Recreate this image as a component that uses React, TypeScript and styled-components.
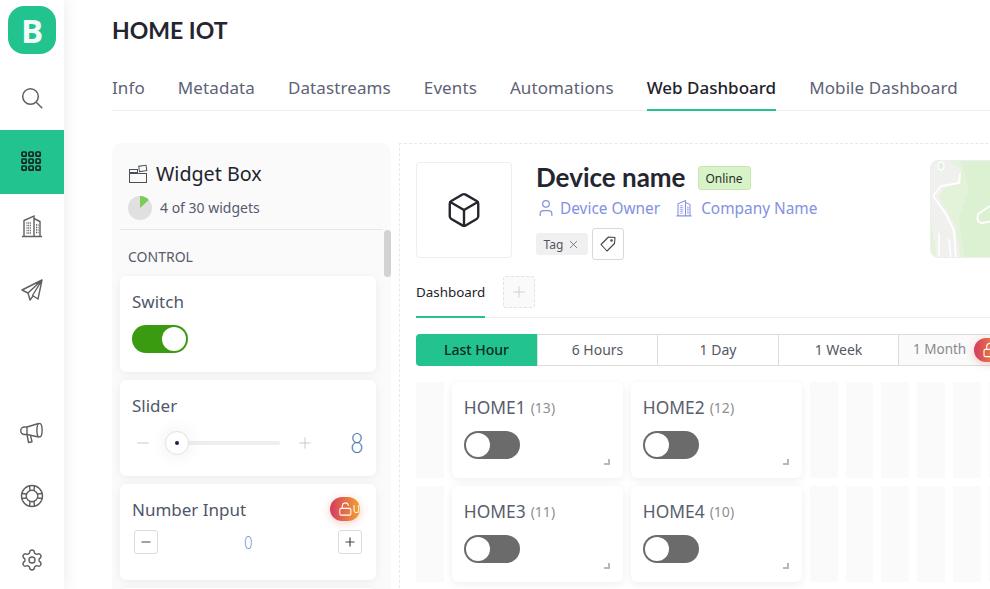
import React from "react";
import styled, { createGlobalStyle } from "styled-components";
import { Settings, Box, X, Plus, Minus, LockOpen, User } from "lucide-react";

const Global = createGlobalStyle`
  html, body { margin: 0; padding: 0; background: #fff; }
  body { font-family: "Noto Sans", "Open Sans", sans-serif; color: #51566a; }
  * { box-sizing: border-box; }
`;

const Frame = styled.div`
  width: 990px; height: 589px; overflow: hidden; display: flex; background: #fff;
`;
const Sidebar = styled.nav`
  width: 64px; height: 589px; flex: none; display: flex; flex-direction: column;
  box-shadow: 2px 0 14px rgba(0,0,0,.07); background: #fff; position: relative; z-index: 2;
`;
const LogoWrap = styled.div`
  height: 66px; padding: 6px 8px 12px; flex: none;
`;
const Logo = styled.div`
  width: 48px; height: 48px; border-radius: 16px; background: #22c38e; color: #f2fbf7;
  display: flex; align-items: center; justify-content: center;
  font: 700 33px "Open Sans", sans-serif;
`;
const NavItem = styled.div<{ $active?: boolean }>`
  height: 64px; flex: none; display: flex; align-items: center; justify-content: center;
  color: #5f5f5f; background: ${p => (p.$active ? "#22c38e" : "transparent")};
`;
const NavBottom = styled.div`
  margin-top: 78px; display: flex; flex-direction: column;
`;

const Main = styled.main`
  flex: none; width: 926px; padding-left: 48px;
`;
const Title = styled.h1`
  margin: 0; height: 60px; padding-top: 15px; font: 700 23px/30px Lato, sans-serif; color: #25252f;
`;
const Tabs = styled.div`
  display: flex; gap: 33px; height: 51px; border-bottom: 1px solid #eceef0; padding-top: 16px; width: 878px;
`;
const TabItem = styled.div<{ $active?: boolean }>`
  height: 35px; font-size: 17px; line-height: 24px; white-space: nowrap;
  letter-spacing: ${p => (p.$active ? "0" : ".1px")};
  color: ${p => (p.$active ? "#22222c" : "#5d6274")};
  font-weight: ${p => (p.$active ? 500 : 400)};
  border-bottom: ${p => (p.$active ? "2px solid #22c38e" : "none")};
`;
const Body = styled.div`
  display: flex; gap: 8px; margin-top: 32px; width: 1100px;
`;
const WidgetBox = styled.aside`
  width: 279px; height: 460px; flex: none; background: #fafafa; border-radius: 10px 10px 0 0; padding: 0 8px; position: relative; overflow: hidden;
`;
const BoxHead = styled.div`
  height: 87px; border-bottom: 1px solid #e6e6e6; padding: 18px 8px 0;
`;
const BoxTitle = styled.div`
  display: flex; align-items: center; gap: 8px; font-size: 19.7px; line-height: 26px; color: #23232d;
`;
const BoxSub = styled.div`
  display: flex; align-items: center; gap: 8px; font-size: 14px; line-height: 24px; margin-top: 9px; color: #575b6b;
`;
const Scroll = styled.div`
  position: absolute; right: 0; top: 87px; width: 7px; height: 47px; background: #d2d2d2; border-radius: 4px;
`;
const SectionLabel = styled.div`
  font-size: 14px; line-height: 20px; padding: 17px 8px 9px; color: #575b6b; height: 46px;
`;
const Stack = styled.div`
  display: flex; flex-direction: column; gap: 8px; width: 256px;
`;
const Card = styled.div`
  background: #fff; border-radius: 6px; height: 96px; padding: 12px; position: relative;
  box-shadow: 0 2px 8px rgba(0,0,0,.06);
`;
const CardTitle = styled.div`
  font-size: 17px; line-height: 28px; color: #51566a;
`;
const Toggle = styled.div<{ $on?: boolean }>`
  width: 56px; height: 28px; border-radius: 14px; margin-top: 9px; padding: 2px;
  background: ${p => (p.$on ? "#3a9b10" : "#6b6b6b")};
  display: flex; justify-content: ${p => (p.$on ? "flex-end" : "flex-start")};
`;
const Knob = styled.div`
  width: 24px; height: 24px; border-radius: 50%; background: #fff;
`;
const SliderRow = styled.div`
  display: flex; align-items: center; height: 46px; margin-left: 2px;
`;
const Track = styled.div`
  position: relative; width: 103px; height: 4px; background: #eee; border-radius: 2px; margin: 0 16px 0 25px;
`;
const Thumb = styled.div`
  position: absolute; left: -12px; top: -10px; width: 24px; height: 24px; border-radius: 50%;
  background: #fff; border: 1px solid #e2e2e2; box-shadow: 0 0 18px rgba(0,0,0,.08);
  display: flex; align-items: center; justify-content: center;
  &::after { content: ""; width: 4px; height: 4px; border-radius: 50%; background: #1c2150; }
`;
const SliderValue = styled.div`
  margin-left: auto; margin-right: -1px; font: 300 27px/30px Lato, sans-serif; color: #4f76a5; transform: scaleX(.85);
`;
const NumberRow = styled.div`
  display: flex; align-items: center; justify-content: space-between; margin: 6px 2px 0;
`;
const StepButton = styled.div`
  width: 24px; height: 24px; border: 1px solid #dcdcdc; border-radius: 3px; display: flex; align-items: center; justify-content: center; color: #444;
`;
const NumberValue = styled.div`
  font: 300 18px/24px Lato, sans-serif; color: #4f76c5; transform: scaleX(.72);
`;
const Premium = styled.div<{ $top: number; $right: number }>`
  position: absolute; top: ${p => p.$top}px; right: ${p => p.$right}px; width: 30px; height: 24px; border-radius: 12px;
  background: linear-gradient(90deg, #d63a62, #f2a12e); color: #fff; display: flex; align-items: center; overflow: hidden;
  padding-left: 8px; font-size: 10px; box-shadow: 0 2px 8px rgba(220,90,60,.3);
`;

const Canvas = styled.section`
  width: 780px; flex: none; height: 460px; padding: 18px 16px 0; border-top: 1px dashed #e8e8e8; border-left: 1px dashed #e8e8e8;
`;
const DeviceHead = styled.div`
  display: flex; height: 100px;
`;
const DeviceImage = styled.div`
  width: 96px; height: 96px; border: 1px solid #eee; border-radius: 4px; display: flex; align-items: center; justify-content: center; color: #25252f; flex: none;
`;
const DeviceInfo = styled.div`
  margin-left: 24px; display: flex; flex-direction: column;
`;
const NameRow = styled.div`
  display: flex; align-items: center; gap: 12px; height: 32px;
`;
const DeviceName = styled.div`
  font: 700 26px/30px Lato, sans-serif; color: #25252f; margin-bottom: 2px;
`;
const Online = styled.div`
  width: 53px; height: 24px; border: 1px solid #c5e8b0; background: #d8f3c8; border-radius: 3px; color: #25302a;
  font-size: 12px; display: flex; align-items: center; justify-content: center;
`;
const OwnerRow = styled.div`
  display: flex; gap: 15px; margin-top: -1px; height: 30px; align-items: center; font-size: 15.4px; color: #8391e0;
`;
const Owner = styled.div`
  display: flex; align-items: center; gap: 4px; white-space: nowrap;
`;
const TagRow = styled.div`
  display: flex; align-items: center; gap: 4px; margin-top: 5px;
`;
const TagChip = styled.div`
  width: 52px; height: 22px; background: #f0f0f0; border-radius: 3px; font-size: 12px; color: #50545f;
  display: flex; align-items: center; justify-content: center; gap: 4px;
`;
const TagButton = styled.div`
  width: 32px; height: 32px; border: 1px solid #d8d8d8; border-radius: 3px; display: flex; align-items: center; justify-content: center; color: #444;
`;
const MapBox = styled.div`
  margin-left: auto; width: 233px; height: 98px; margin-top: -2px; border-radius: 8px; overflow: hidden; border: 1px solid #eee; flex: none;
`;
const DashTabs = styled.div`
  display: flex; height: 42px; margin-top: 14px; border-bottom: 1px solid #eceef0; width: 748px; align-items: flex-start;
`;
const DashTab = styled.div`
  width: 69px; height: 42px; border-bottom: 2px solid #22c38e; font-size: 13.4px; color: #23232d; line-height: 32px; white-space: nowrap;
`;
const AddTab = styled.div`
  width: 32px; height: 32px; margin-left: 18px; border: 1px dashed #e2e2e2; border-radius: 3px; background: #fafafa; color: #c4c4c4;
  display: flex; align-items: center; justify-content: center;
`;
const Ranges = styled.div`
  display: grid; grid-template-columns: 120px 120px 121px 120px 121px; margin-top: 16px; height: 32px; width: 603px;
  border: 1px solid #ddd; border-radius: 4px;
`;
const Range = styled.div<{ $active?: boolean; $locked?: boolean }>`
  position: relative; font-size: ${p => (p.$locked ? "13.5px" : "14px")}; display: flex; align-items: center; justify-content: ${p => (p.$locked ? "flex-start" : "center")};
  padding: 0 0 2px ${p => (p.$locked ? "14px" : "0")};
  color: ${p => (p.$active ? "#0e2a22" : p.$locked ? "#8a8a8a" : "#55575f")};
  background: ${p => (p.$active ? "#22c38e" : p.$locked ? "#fafafa" : "#fff")};
  font-weight: ${p => (p.$active ? 500 : 400)};
  margin: ${p => (p.$active ? "-1px 0 -1px -1px" : "0")};
  border-radius: ${p => (p.$active ? "4px 0 0 4px" : "0")};
  border-left: ${p => (p.$active ? "none" : "1px solid #ddd")};
`;
const Grid = styled.div`
  display: grid; grid-template-columns: repeat(18, 27.8px); grid-template-rows: 96px 96px; gap: 8px; margin-top: 16px;
`;
const Stripe = styled.div<{ $col: number; $row: number }>`
  grid-column: ${p => p.$col}; grid-row: ${p => p.$row}; background: #fafafa;
`;
const Tile = styled.div<{ $col: number; $row: number }>`
  grid-column: ${p => p.$col} / span 5; grid-row: ${p => p.$row}; background: #fff; border-radius: 6px; padding: 12px; position: relative;
  box-shadow: 0 2px 8px rgba(0,0,0,.07);
`;
const TileTitle = styled.div`
  font-size: 17.4px; line-height: 26px; height: 28px; color: #5a5e6c; white-space: nowrap;
`;
const Count = styled.span`
  font-size: 14px; color: #8f8f8f; margin-left: 5px; vertical-align: 1px;
`;
const Corner = styled.div`
  position: absolute; right: 13px; bottom: 13px; width: 6px; height: 6px; border-right: 2px solid #b8b8b8; border-bottom: 2px solid #b8b8b8;
`;

const SearchIcon = () => (
  <svg width="24" height="24" viewBox="0 0 24 24" fill="none" stroke="#5f5f5f" strokeWidth="1.5">
    <circle cx="10.5" cy="10.5" r="7.8" />
    <path d="m16.2 16.2 6 6" />
  </svg>
);
const GridIcon = () => (
  <svg width="24" height="24" viewBox="0 0 24 24" fill="none" stroke="#12261f" strokeWidth="1.7">
    {[3, 10, 17].flatMap(y => [3, 10, 17].map(x => <rect key={`${x}${y}`} x={x - 1} y={y - 1} width="4.2" height="4.2" rx="1" />))}
  </svg>
);
const BuildingIcon = ({ size = 24, color = "#5f5f5f" }: { size?: number; color?: string }) => (
  <svg width={size} height={size} viewBox="0 0 24 24" fill="none" stroke={color} strokeWidth="1.4">
    <path d="M2 22.5h20M4 22V6.5L14 2v20M14 4.5l6 3V22" />
    <path d="M6.5 9h5M6.5 11.5h5M6.5 14h5M6.5 16.5h5M6.5 19h5M16 11h2.5M16 13.5h2.5M16 16h2.5M16 18.5h2.5" strokeDasharray="1 .7" />
  </svg>
);
const PlaneIcon = () => (
  <svg width="24" height="24" viewBox="0 0 24 24" fill="none" stroke="#5f5f5f" strokeWidth="1.4" strokeLinejoin="round">
    <path d="M22 2 2 12l6 3 14-13-9.5 15.5L18 21 22 2ZM8 15l2 7 3.5-4.5" />
  </svg>
);
const HornIcon = () => (
  <svg width="24" height="24" viewBox="0 0 24 24" fill="none" stroke="#5f5f5f" strokeWidth="1.4" strokeLinejoin="round">
    <path d="M7 7 18.5 3.5M7 14.5l11.5 2.5" />
    <ellipse cx="19.5" cy="10.2" rx="2.6" ry="6.8" />
    <path d="M7 7H4.500a3.700 3.700 0 0 0 0 7.500H7ZM7 14.500l1.500 8 3.500-.8-1.500-6.400" />
  </svg>
);
const BuoyIcon = () => (
  <svg width="24" height="24" viewBox="0 0 24 24" fill="none" stroke="#5f5f5f" strokeWidth="1.4">
    <circle cx="12" cy="12" r="10.5" />
    <circle cx="12" cy="12" r="5.8" />
    <path d="M9.5 1.900 10 6.500M14.500 1.900 14 6.500M9.500 22.100l.5-4.600M14.500 22.100l-.5-4.600M1.900 9.500l4.600.5M1.900 14.500l4.600-.5M22.100 9.500l-4.600.5M22.100 14.500l-4.600-.5" />
  </svg>
);
const TagIcon = () => (
  <svg width="18" height="18" viewBox="0 0 18 18" fill="none" stroke="#444" strokeWidth="1.1" strokeLinejoin="round">
    <path d="M16 2.500 9.500 2 2 9.500l6 6.500 7.500-7.500Z" />
    <circle cx="12.5" cy="5.5" r=".8" />
  </svg>
);
const WidgetIcon = () => (
  <svg width="20" height="20" viewBox="0 0 20 20" fill="none" stroke="#4b4f58" strokeWidth="1">
    <rect x="1.5" y="9.5" width="17" height="9" />
    <rect x="1.5" y="5.5" width="8" height="3" />
    <rect x="11" y="1.8" width="7.4" height="5.5" transform="rotate(-8 14 4)" />
  </svg>
);
const Pie = () => (
  <svg width="24" height="24" viewBox="0 0 24 24">
    <circle cx="12" cy="12" r="12" fill="#e0e0e0" />
    <path d="M12 0a12 12 0 0 1 8.8 3.900L12 12Z" fill="#7ccb5a" />
  </svg>
);
const MapArt = () => (
  <svg width="233" height="98" viewBox="0 0 233 98">
    <rect width="233" height="98" fill="#e2f3d9" />
    <path d="M30 0h45l-10 40 10 58H34l-6-40 10-30Z" fill="#dcf0d2" />
    <path d="M0 0h18l12 8v14l-18 6-4 8 16 28 6 34H6l-6-38Z" fill="#f0f0ee" />
    <path d="M2 35l13 18 8 17 2 28M2 35l8-10 18-3 1-9" stroke="#fff" strokeWidth="1.8" fill="none" />
    <path d="M8 72v26M18 78l2 20" stroke="#fff" strokeWidth="1.5" fill="none" />
    <path d="M62 43 47 53q-2 9 4 9l11-2" stroke="#fff" strokeWidth="1.8" fill="none" />
    <ellipse cx="10" cy="5" rx="3" ry="4" fill="#e2f3d9" stroke="#fff" strokeWidth="1.4" />
  </svg>
);

const tabs = ["Info", "Metadata", "Datastreams", "Events", "Automations", "Web Dashboard", "Mobile Dashboard"];
const ranges = ["Last Hour", "6 Hours", "1 Day", "1 Week"];
const tiles = [
  { name: "HOME1", n: 13, col: 2, row: 1 },
  { name: "HOME2", n: 12, col: 7, row: 1 },
  { name: "HOME3", n: 11, col: 2, row: 2 },
  { name: "HOME4", n: 10, col: 7, row: 2 },
];

export default function App() {
  return (
    <Frame>
      <Global />
      <Sidebar>
        <LogoWrap><Logo>B</Logo></LogoWrap>
        <NavItem><SearchIcon /></NavItem>
        <NavItem $active><GridIcon /></NavItem>
        <NavItem><BuildingIcon /></NavItem>
        <NavItem><PlaneIcon /></NavItem>
        <NavBottom>
          <NavItem><HornIcon /></NavItem>
          <NavItem><BuoyIcon /></NavItem>
          <NavItem><Settings size={24} strokeWidth={1.4} /></NavItem>
        </NavBottom>
      </Sidebar>
      <Main>
        <Title>HOME IOT</Title>
        <Tabs>
          {tabs.map(t => <TabItem key={t} $active={t === "Web Dashboard"}>{t}</TabItem>)}
        </Tabs>
        <Body>
          <WidgetBox>
            <BoxHead>
              <BoxTitle><WidgetIcon />Widget Box</BoxTitle>
              <BoxSub><Pie />4 of 30 widgets</BoxSub>
            </BoxHead>
            <Scroll />
            <SectionLabel>CONTROL</SectionLabel>
            <Stack>
              <Card>
                <CardTitle>Switch</CardTitle>
                <Toggle $on><Knob /></Toggle>
              </Card>
              <Card>
                <CardTitle>Slider</CardTitle>
                <SliderRow>
                  <Minus size={18} strokeWidth={1} color="#bbb" />
                  <Track><Thumb /></Track>
                  <Plus size={18} strokeWidth={1} color="#bbb" />
                  <SliderValue>8</SliderValue>
                </SliderRow>
              </Card>
              <Card>
                <CardTitle>Number Input</CardTitle>
                <Premium $top={13} $right={16}><LockOpen size={16} strokeWidth={1.7} />U</Premium>
                <NumberRow>
                  <StepButton><Minus size={14} /></StepButton>
                  <NumberValue>0</NumberValue>
                  <StepButton><Plus size={14} /></StepButton>
                </NumberRow>
              </Card>
              <Card />
            </Stack>
          </WidgetBox>
          <Canvas>
            <DeviceHead>
              <DeviceImage><Box size={38} strokeWidth={1.5} /></DeviceImage>
              <DeviceInfo>
                <NameRow><DeviceName>Device name</DeviceName><Online>Online</Online></NameRow>
                <OwnerRow>
                  <Owner><User size={20} strokeWidth={1.5} />Device Owner</Owner>
                  <Owner><BuildingIcon size={18} color="#8391e0" />&nbsp;Company Name</Owner>
                </OwnerRow>
                <TagRow>
                  <TagChip>Tag<X size={13} strokeWidth={1.3} /></TagChip>
                  <TagButton><TagIcon /></TagButton>
                </TagRow>
              </DeviceInfo>
              <MapBox><MapArt /></MapBox>
            </DeviceHead>
            <DashTabs>
              <DashTab>Dashboard</DashTab>
              <AddTab><Plus size={18} strokeWidth={1} /></AddTab>
            </DashTabs>
            <Ranges>
              {ranges.map((r, i) => <Range key={r} $active={i === 0}>{r}</Range>)}
              <Range $locked>1 Month<Premium $top={3} $right={15}><LockOpen size={16} strokeWidth={1.7} /></Premium></Range>
            </Ranges>
            <Grid>
              {[1, 2].flatMap(row => [1, 12, 13, 14, 15, 16, 17].map(col => <Stripe key={`${row}-${col}`} $col={col} $row={row} />))}
              {tiles.map(t => (
                <Tile key={t.name} $col={t.col} $row={t.row}>
                  <TileTitle>{t.name}<Count>({t.n})</Count></TileTitle>
                  <Toggle><Knob /></Toggle>
                  <Corner />
                </Tile>
              ))}
            </Grid>
          </Canvas>
        </Body>
      </Main>
    </Frame>
  );
}
